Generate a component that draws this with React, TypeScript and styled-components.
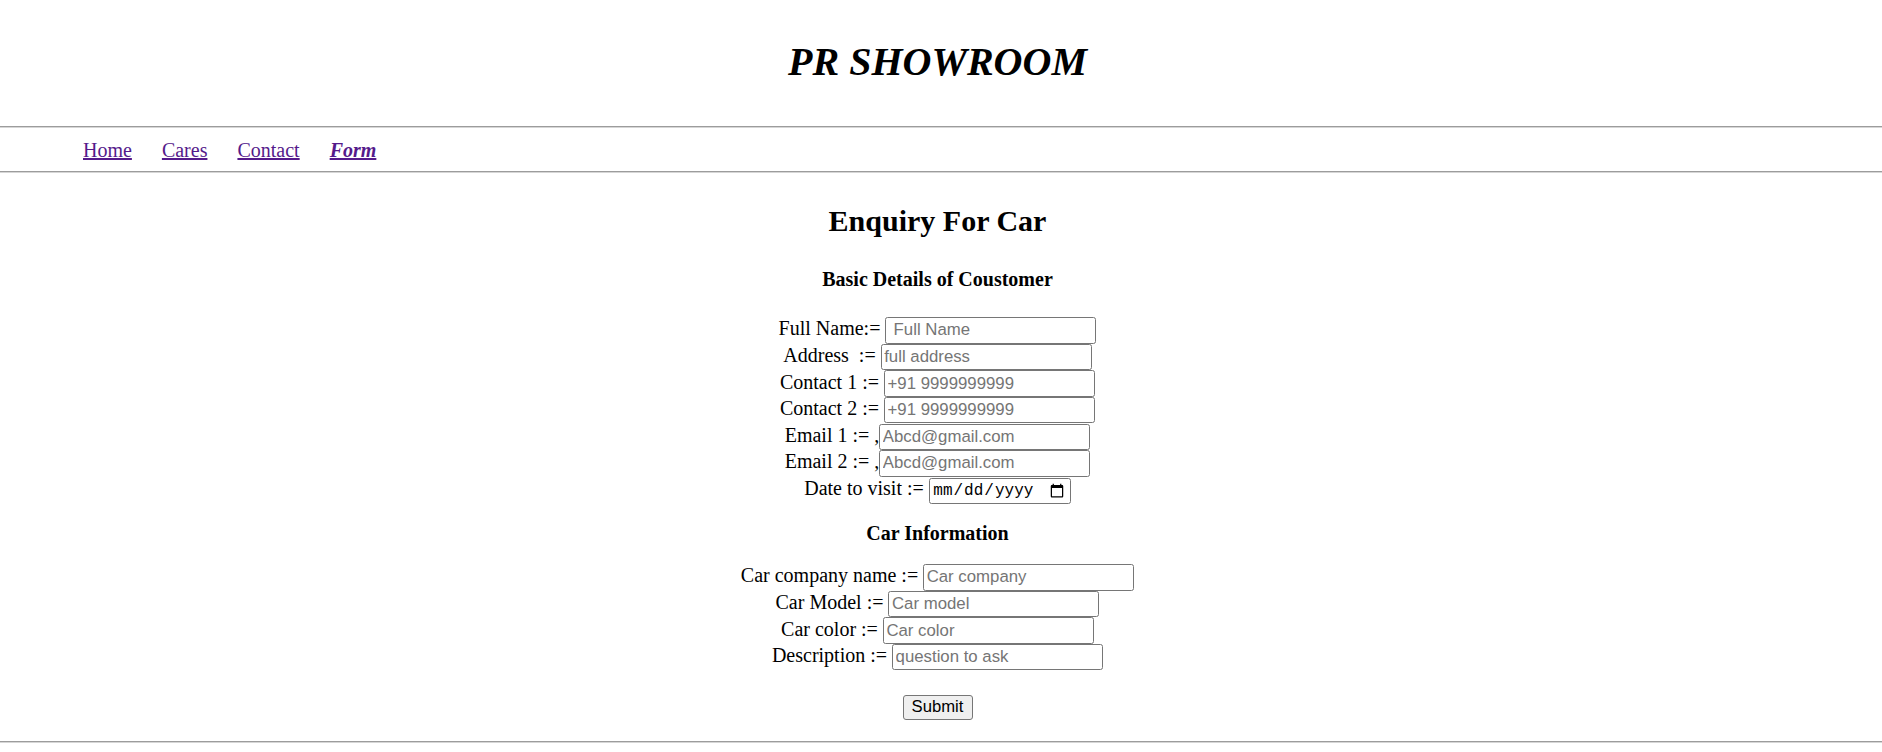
import React from "react";
import styled, { createGlobalStyle } from "styled-components";

const Global = createGlobalStyle`
  html, body { margin: 0; padding: 0; background: #ffffff; }
  body {
    font-family: "Liberation Serif", "Times New Roman", serif;
    font-size: 20px;
    color: #000000;
  }
  #root { min-height: 752px; }
`;

const Header = styled.header`
  padding: 39px 7px 41px 0;
`;

const Title = styled.h1`
  margin: 0;
  font-size: 40px;
  line-height: 46px;
  font-weight: bold;
  font-style: italic;
  text-align: center;
`;

const Rule = styled.div`
  height: 0;
  border-top: 1px solid #9c9c9c;
  border-bottom: 1px solid #d6d6d6;
`;

const Nav = styled.nav`
  display: flex;
  gap: 30px;
  padding: 11px 0 9px 83px;
  line-height: 23px;
`;

const NavLink = styled.a<{ $active?: boolean }>`
  color: #551a8b;
  text-decoration: underline;
  font-weight: ${(p) => (p.$active ? "bold" : "normal")};
  font-style: ${(p) => (p.$active ? "italic" : "normal")};
  cursor: pointer;
`;

const FormBox = styled.form`
  display: flex;
  flex-direction: column;
  align-items: center;
  padding-right: 7px;
`;

const Heading = styled.h2`
  margin: 30.8px 0 0;
  font-size: 30px;
  line-height: 34.5px;
  font-weight: bold;
`;

const SubHeading = styled.h4<{ $top: number }>`
  margin: ${(p) => p.$top}px 0 0;
  font-size: 20px;
  line-height: 23px;
  font-weight: bold;
`;

const Fields = styled.div<{ $top: number }>`
  display: flex;
  flex-direction: column;
  align-items: center;
  margin-top: ${(p) => p.$top}px;
`;

const Row = styled.div`
  display: flex;
  align-items: baseline;
  justify-content: center;
  height: 26.6px;
`;

const Label = styled.span`
  white-space: pre;
`;

const Input = styled.input`
  box-sizing: border-box;
  width: 211px;
  height: 26.5px;
  margin: 0;
  padding: 1px 2.5px;
  border: 1px solid #767676;
  border-radius: 2.5px;
  background: #ffffff;
  font-family: "Liberation Sans", Arial, sans-serif;
  font-size: 16.8px;
  color: #000000;
  &::placeholder {
    color: #757575;
    white-space: pre;
  }
`;

const DateInput = styled(Input)`
  width: 142px;
  height: 25.5px;
  font-family: "Liberation Mono", "Courier New", monospace;
  font-size: 16px;
`;

const SubmitButton = styled.button`
  box-sizing: border-box;
  margin-top: 24.2px;
  width: 70px;
  height: 25.4px;
  padding: 1px 7.5px;
  border: 1px solid #767676;
  border-radius: 3px;
  background: #efefef;
  font-family: "Liberation Sans", Arial, sans-serif;
  font-size: 16.67px;
  color: #000000;
`;

const Bottom = styled.div`
  margin-top: 20.6px;
`;

type Field = { label: string; placeholder: string; type?: string };

const basic: Field[] = [
  { label: "Full Name:= ", placeholder: " Full Name" },
  { label: "Address\u00a0 := ", placeholder: "full address" },
  { label: "Contact 1 := ", placeholder: "+91 9999999999" },
  { label: "Contact 2 := ", placeholder: "+91 9999999999" },
  { label: "Email 1 := ,", placeholder: "Abcd@gmail.com" },
  { label: "Email 2 := ,", placeholder: "Abcd@gmail.com" },
  { label: "Date to visit := ", placeholder: "", type: "date" },
];

const car: Field[] = [
  { label: "Car company name := ", placeholder: "Car company" },
  { label: "Car Model := ", placeholder: "Car model" },
  { label: "Car color := ", placeholder: "Car color" },
  { label: "Description := ", placeholder: "question to ask" },
];

function FieldRow({ f }: { f: Field }) {
  return (
    <Row>
      <Label>{f.label}</Label>
      {f.type === "date" ? (
        <DateInput type="date" />
      ) : (
        <Input type="text" placeholder={f.placeholder} />
      )}
    </Row>
  );
}

export default function App() {
  return (
    <>
      <Global />
      <Header>
        <Title>PR SHOWROOM</Title>
      </Header>
      <Rule />
      <Nav>
        <NavLink>Home</NavLink>
        <NavLink>Cares</NavLink>
        <NavLink>Contact</NavLink>
        <NavLink $active>Form</NavLink>
      </Nav>
      <Rule />
      <FormBox onSubmit={(e) => e.preventDefault()}>
        <Heading>Enquiry For Car</Heading>
        <SubHeading $top={29.6}>Basic Details of Coustomer</SubHeading>
        <Fields $top={26.3}>
          {basic.map((f) => (
            <FieldRow key={f.label} f={f} />
          ))}
        </Fields>
        <SubHeading $top={19}>Car Information</SubHeading>
        <Fields $top={18.8}>
          {car.map((f) => (
            <FieldRow key={f.label} f={f} />
          ))}
        </Fields>
        <SubmitButton type="submit">Submit</SubmitButton>
      </FormBox>
      <Bottom>
        <Rule />
      </Bottom>
    </>
  );
}
